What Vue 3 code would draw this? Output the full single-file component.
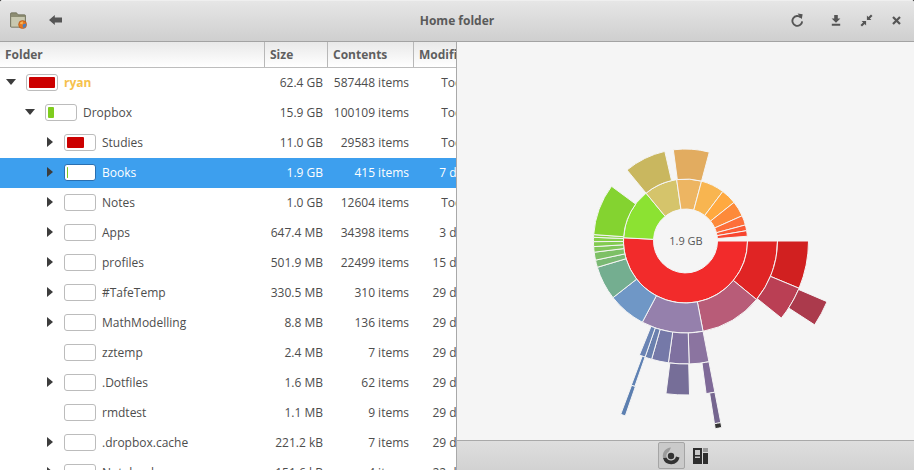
<template>
  <div class="window">
    <header class="toolbar">
      <div class="tools-left">
        <svg class="app-icon" width="17" height="17" viewBox="0 0 17 17">
          <path d="M0.5 2 Q0.5 0.8 1.5 0.8 H6.5 L8 2.8 H14.5 Q15.5 2.8 15.5 3.8 V14.5 Q15.5 15.2 14.5 15.2 H1.5 Q0.5 15.2 0.5 14.5 Z" fill="#8d8d72" stroke="#66664f" stroke-width="0.7" />
          <rect x="1.2" y="5" width="13.6" height="9.6" fill="#c8c8b0" />
          <circle cx="12.6" cy="12.6" r="4" fill="#e8761e" stroke="#a8521a" stroke-width="0.6" />
          <path d="M12.6 12.6 L15.8 11.4 A3.4 3.4 0 0 1 13 16 Z" fill="#4a7fc0" />
          <path d="M9.8 11.4 A3 3 0 0 1 13 9.6 L12.6 12.4 Z" fill="#f4b45a" />
        </svg>
        <svg class="back-icon" width="13" height="10" viewBox="0 0 13 10">
          <path d="M0 5 L5.8 0 V2.6 H13 V7.4 H5.8 V10 Z" fill="#555" />
        </svg>
      </div>
      <div class="title">Home folder</div>
      <div class="tools-right">
        <svg class="refresh" width="13" height="15" viewBox="0 0 13 15">
          <path d="M9.9 4.6 A4.9 4.9 0 1 0 11.2 8.4" fill="none" stroke="#555" stroke-width="1.9" />
          <path d="M6.6 0.4 L11.6 1.2 L10.8 6.2 Z" fill="#555" />
        </svg>
        <svg width="10" height="11" viewBox="0 0 10 11">
          <path d="M3.2 0 H6.8 V3.6 H9.4 L5 7.8 L0.6 3.6 H3.2 Z M0.8 8.8 H9.2 V10.8 H0.8 Z" fill="#555" />
        </svg>
        <svg width="13" height="13" viewBox="0 0 13 13">
          <path d="M6.9 6.1 V1.6 L8.4 3.1 L11 0.5 L12.5 2 L9.9 4.6 L11.4 6.1 Z M6.1 6.9 V11.4 L4.6 9.9 L2 12.5 L0.5 11 L3.1 8.4 L1.6 6.9 Z" fill="#555" />
        </svg>
        <svg width="9" height="9" viewBox="0 0 9 9">
          <path d="M1 1 L8 8 M8 1 L1 8" stroke="#555" stroke-width="2.2" />
        </svg>
      </div>
    </header>

    <div class="panes">
      <section class="tree">
        <div class="tree-head">
          <div class="head-cell">Folder</div>
          <div class="head-cell">Size</div>
          <div class="head-cell">Contents</div>
          <div class="head-cell">Modified</div>
        </div>
        <div
          v-for="row in rows"
          :key="row.name"
          class="row"
          :class="{ selected: row.selected }"
        >
          <div class="name-cell" :style="{ paddingLeft: row.depth * 19 + 'px' }">
            <span class="expander" :class="row.arrow"></span>
            <span class="bar">
              <span class="bar-fill" :style="{ width: row.fill + 'px', background: row.color }"></span>
            </span>
            <span class="name" :class="{ root: row.depth === 0 }">{{ row.name }}</span>
          </div>
          <div class="num">{{ row.size }}</div>
          <div class="num">{{ row.items }}</div>
          <div class="date">{{ row.date }}</div>
        </div>
      </section>

      <section class="chart-pane">
        <div class="chart">
          <svg width="457" height="398" viewBox="457 42 457 398">
            <path
              v-for="(s, i) in segments"
              :key="i"
              :d="arc(s)"
              :fill="s[4]"
              stroke="#f5f5f5"
              stroke-width="1"
            />
            <text x="686" y="245" class="center-label" text-anchor="middle">1.9 GB</text>
          </svg>
        </div>
        <footer class="chart-foot">
          <button class="view-btn active">
            <svg width="20" height="20" viewBox="0 0 20 20">
              <path d="M10 1.5 A8.5 8.5 0 0 0 2 12 L5.5 11 A4.8 4.8 0 0 1 8 5.6 Z" fill="#9a9a9a" />
              <path d="M2 12 A8.5 8.5 0 0 0 18.5 11.5 L15 10.5 A5 5 0 0 1 5.5 11.5 Z" fill="#333" />
              <circle cx="10" cy="10" r="3.2" fill="#333" />
            </svg>
          </button>
          <button class="view-btn">
            <svg width="15" height="16" viewBox="0 0 15 16">
              <rect x="0" y="0" width="9" height="16" fill="#2e2e2e" />
              <rect x="2" y="2" width="5" height="5" fill="#c9c9c9" />
              <rect x="2" y="8.5" width="5" height="1.5" fill="#c9c9c9" />
              <rect x="10" y="0" width="5" height="4" fill="#9a9a9a" />
              <rect x="10" y="5" width="5" height="11" fill="#2e2e2e" />
            </svg>
          </button>
        </footer>
      </section>
    </div>
  </div>
</template>

<script setup>
const green = '#7fcc1e'

const rows = [
  { name: 'ryan', depth: 0, arrow: 'open', fill: 26, color: '#cc0000', size: '62.4 GB', items: '587448 items', date: 'Today' },
  { name: 'Dropbox', depth: 1, arrow: 'open', fill: 6, color: green, size: '15.9 GB', items: '100109 items', date: 'Today' },
  { name: 'Studies', depth: 2, arrow: 'closed', fill: 17, color: '#cc0000', size: '11.0 GB', items: '29583 items', date: 'Today' },
  { name: 'Books', depth: 2, arrow: 'closed', fill: 1, color: green, size: '1.9 GB', items: '415 items', date: '7 days', selected: true },
  { name: 'Notes', depth: 2, arrow: 'closed', fill: 0, size: '1.0 GB', items: '12604 items', date: 'Today' },
  { name: 'Apps', depth: 2, arrow: 'closed', fill: 0, size: '647.4 MB', items: '34398 items', date: '3 days' },
  { name: 'profiles', depth: 2, arrow: 'closed', fill: 0, size: '501.9 MB', items: '22499 items', date: '15 days' },
  { name: '#TafeTemp', depth: 2, arrow: 'closed', fill: 0, size: '330.5 MB', items: '310 items', date: '29 days' },
  { name: 'MathModelling', depth: 2, arrow: 'closed', fill: 0, size: '8.8 MB', items: '136 items', date: '29 days' },
  { name: 'zztemp', depth: 2, arrow: '', fill: 0, size: '2.4 MB', items: '7 items', date: '29 days' },
  { name: '.Dotfiles', depth: 2, arrow: 'closed', fill: 0, size: '1.6 MB', items: '62 items', date: '29 days' },
  { name: 'rmdtest', depth: 2, arrow: '', fill: 0, size: '1.1 MB', items: '9 items', date: '29 days' },
  { name: '.dropbox.cache', depth: 2, arrow: 'closed', fill: 0, size: '221.2 kB', items: '7 items', date: '29 days' },
  { name: 'Notebooks', depth: 2, arrow: 'closed', fill: 0, size: '151.6 kB', items: '4 items', date: '22 days' }
]

// inner radius, outer radius, start and end angle (clockwise from east), colour
const segments = [
  [32, 62, 0, 183, '#f22b2b'],
  [32, 62, 183, 230.5, '#8ce232'],
  [32, 62, 230.5, 261.8, '#d5c46b'],
  [32, 62, 261.8, 285, '#edb562'],
  [32, 62, 285, 307, '#f8b550'],
  [32, 62, 307, 321.5, '#ffa940'],
  [32, 62, 321.5, 336, '#fd8a3a'],
  [32, 62, 336, 345, '#fd6f3a'],
  [32, 62, 345, 350.4, '#fb5a35'],
  [32, 62, 350.4, 355.6, '#f8452f'],

  [62, 92, 0, 39.5, '#e02424'],
  [62, 92, 39.5, 79, '#b85c78'],
  [62, 92, 79, 118, '#9580ac'],
  [62, 92, 118, 142, '#6f97c6'],
  [62, 92, 142, 163.4, '#74ae90'],
  [62, 92, 163.4, 168, '#7ab973'],
  [62, 92, 168, 173, '#7dc065'],
  [62, 92, 173, 176.5, '#80c65a'],
  [62, 92, 176.5, 179.6, '#82cb50'],
  [62, 92, 179.6, 182.3, '#84cf48'],
  [62, 92, 182.3, 184, '#85d240'],
  [62, 92, 184, 216.5, '#84d330'],
  [62, 92, 230.5, 257, '#c9b75f'],
  [62, 92, 262.4, 285, '#e2ac60'],

  [92, 123, 0, 22.6, '#d12020'],
  [92, 123, 22.6, 38.8, '#ba3f54'],
  [92, 123, 79, 88.3, '#8b74a0'],
  [92, 123, 88.3, 98, '#7f71a0'],
  [92, 123, 98, 106, '#7579a8'],
  [92, 123, 106, 109.2, '#6a80ae'],
  [92, 123, 109.2, 112, '#6a84b4'],

  [123, 154, 23.2, 33, '#ab3a4c'],
  [123, 154, 79, 82.3, '#7f6a98'],
  [123, 154, 88.5, 97.3, '#766e98'],
  [123, 154, 109.2, 110.6, '#5f82b4'],

  [154, 185, 79, 81, '#75668f'],
  [154, 185, 109, 110.5, '#5c7fb0'],

  [185, 190, 79, 81, '#333333']
]

const cx = 685.5
const cy = 241

const point = (r, deg) => {
  const a = (deg * Math.PI) / 180
  return `${(cx + r * Math.cos(a)).toFixed(2)} ${(cy + r * Math.sin(a)).toFixed(2)}`
}

const arc = ([r0, r1, a0, a1]) => {
  const large = a1 - a0 > 180 ? 1 : 0
  return `M${point(r0, a0)} L${point(r1, a0)} A${r1} ${r1} 0 ${large} 1 ${point(r1, a1)} L${point(r0, a1)} A${r0} ${r0} 0 ${large} 0 ${point(r0, a0)} Z`
}
</script>

<style>
html,
body {
  background: #2b2b2b;
}
</style>

<style scoped>
.window {
  width: 914px;
  height: 470px;
  display: flex;
  flex-direction: column;
  overflow: hidden;
  border-radius: 3px 3px 0 0;
  background: #fff;
  font-family: "Open Sans", sans-serif;
  font-size: 12px;
  color: #4d4d4d;
}

.toolbar {
  flex: none;
  height: 42px;
  box-sizing: border-box;
  padding-bottom: 2px;
  display: grid;
  grid-template-columns: 1fr auto 1fr;
  align-items: center;
  border-top: 1px solid #efefef;
  border-bottom: 1px solid #a3a3a3;
  background: linear-gradient(#e6e6e6, #cfcfcf);
}

.tools-left {
  display: flex;
  align-items: center;
  gap: 22px;
  padding-left: 10px;
}

.tools-right {
  display: flex;
  align-items: center;
  justify-content: flex-end;
  gap: 19px;
  padding-right: 13px;
}

.refresh {
  margin-right: 8px;
}

.title {
  font-weight: 700;
  color: #5a5a5a;
}

.panes {
  flex: 1;
  min-height: 0;
  display: flex;
}

.tree {
  width: 457px;
  box-sizing: border-box;
  flex: none;
  overflow: hidden;
  border-right: 1px solid #a9a9a9;
}

.tree-head,
.row {
  display: grid;
  grid-template-columns: 265px 63px 86px 62px;
  width: 476px;
}

.tree-head {
  height: 26px;
  box-sizing: border-box;
  border-bottom: 1px solid #bdbdbd;
  background: linear-gradient(#e9e9e9, #fff);
}

.head-cell {
  display: flex;
  align-items: center;
  padding-left: 5px;
  font-weight: 700;
  color: #5f5f5f;
  border-right: 1px solid #b8b8b8;
  overflow: hidden;
}

.head-cell:last-child {
  border-right: 0;
}

.row {
  height: 30px;
  box-sizing: border-box;
  padding-bottom: 2px;
  align-items: center;
}

.row.selected {
  background: #3d9fee;
  color: #fff;
}

.name-cell {
  display: flex;
  align-items: center;
}

.expander {
  flex: none;
  width: 26px;
  height: 10px;
  position: relative;
}

.expander.open::before {
  content: "";
  position: absolute;
  left: 6px;
  top: 2px;
  border-top: 6px solid #3c3c3c;
  border-left: 5px solid transparent;
  border-right: 5px solid transparent;
}

.expander.closed::before {
  content: "";
  position: absolute;
  left: 9px;
  top: 0;
  border-left: 6px solid #3c3c3c;
  border-top: 5px solid transparent;
  border-bottom: 5px solid transparent;
}

.bar {
  flex: none;
  width: 32px;
  height: 17px;
  box-sizing: border-box;
  padding: 2px;
  border: 1px solid #bcbcbc;
  border-radius: 3px;
  background: #fff;
  display: flex;
}

.selected .bar {
  border-color: #2a6fb0;
}

.bar-fill {
  display: block;
  height: 100%;
  border-radius: 1px;
}

.name {
  margin-left: 6px;
  white-space: nowrap;
}

.name.root {
  color: #f6c14c;
  font-weight: 700;
}

.num {
  padding-right: 5px;
  text-align: right;
  white-space: nowrap;
}

.date {
  padding-right: 1px;
  text-align: right;
  white-space: nowrap;
}

.chart-pane {
  flex: 1;
  min-width: 0;
  display: flex;
  flex-direction: column;
  background: #f5f5f5;
}

.chart {
  flex: 1;
  min-height: 0;
}

.chart svg {
  display: block;
}

.center-label {
  font-family: "Open Sans", sans-serif;
  font-size: 11px;
  fill: #555;
}

.chart-foot {
  flex: none;
  height: 30px;
  box-sizing: border-box;
  display: flex;
  align-items: center;
  justify-content: center;
  gap: 2px;
  border-top: 1px solid #a9a9a9;
  background: linear-gradient(#dedede, #d2d2d2);
}

.view-btn {
  width: 27px;
  height: 27px;
  padding: 0;
  display: flex;
  align-items: center;
  justify-content: center;
  background: transparent;
  border: 1px solid transparent;
  border-radius: 2px;
}

.view-btn.active {
  background: #cacaca;
  border-color: #a5a5a5;
}
</style>
